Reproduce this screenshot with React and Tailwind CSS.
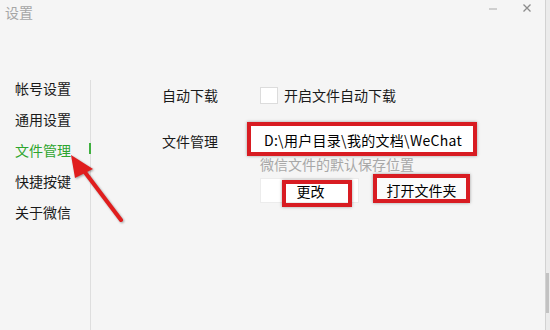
import React from 'react';

const menu = ['帐号设置', '通用设置', '文件管理', '快捷按键', '关于微信'];

function App() {
  const active = '文件管理';

  return (
    <div className="w-[550px] h-[330px] bg-[#f5f5f5] relative overflow-hidden flex font-['Noto_Sans_CJK_SC',sans-serif] text-[14px] text-[#1a1a1a]">
      <div className="flex-1 flex flex-col">
        {/* title bar */}
        <div className="h-[72px] flex items-start justify-between">
          <span className="ml-[5px] mt-[4px] leading-[17px] text-[#a6a6a6]">设置</span>
          <div className="flex items-start gap-[26px] mr-[14px] mt-[4px]">
            <div className="w-[8px] h-[2px] bg-[#cfcfcf] mt-[4px]" />
            <svg width="8" height="8" viewBox="0 0 8 8">
              <path d="M0.5 0.5 L7.5 7.5 M7.5 0.5 L0.5 7.5" stroke="#8c8c8c" strokeWidth="1.3" />
            </svg>
          </div>
        </div>

        <div className="flex flex-1">
          {/* sidebar */}
          <div className="w-[90px] flex flex-col">
            {menu.map(item => (
              <div
                key={item}
                className={`relative h-[31px] flex items-center pl-[15px] leading-none ${item === active ? 'text-[#2ea52e]' : ''}`}
              >
                {item}
                {item === active && (
                  <div className="absolute right-[-1px] top-[9px] w-[2px] h-[11px] bg-[#3fb03f] z-10" />
                )}
              </div>
            ))}
          </div>
          <div className="w-px bg-[#dedede] mt-[8px]" />

          {/* content */}
          <div className="flex-1 flex flex-col pl-[71px]">
            <div className="flex items-center h-[18px] mt-[14px]">
              <span className="w-[98px] leading-none">自动下载</span>
              <div className="w-[18px] h-[17px] bg-white border border-[#dcdcdc]" />
              <span className="ml-[6px] leading-none">开启文件自动下载</span>
            </div>

            <div className="flex items-center h-[34px] mt-[18px]">
              <span className="w-[98px] leading-none pt-[3px]">文件管理</span>
              <div className="ml-[-13px] w-[230px] h-[34px] bg-white border-4 border-[#d81c22] shadow-[0_0_3px_rgba(0,0,0,0.35)] flex items-center pl-[13px] pt-[2px] leading-none text-[14px] tracking-[0.3px] text-black">
                D:\用户目录\我的文档\WeChat
              </div>
            </div>

            <div className="ml-[98px] h-[16px] leading-[16px] text-[#a8a8a8]">微信文件的默认保存位置</div>

            <div className="ml-[98px] mt-[6px] flex items-start">
              <div className="relative w-[99px] h-[25px] bg-white border border-[#ececec] flex items-center justify-center leading-none text-black pl-[2px]">
                更改
                <div className="absolute left-[21px] top-[1px] w-[70px] h-[27px] border-4 border-[#d81c22] shadow-[0_0_3px_rgba(0,0,0,0.35)]" />
              </div>
              <div className="ml-[14px] mt-[-4px] w-[97px] h-[29px] bg-[#fbfbfb] border-4 border-[#d81c22] shadow-[0_0_3px_rgba(0,0,0,0.35)] flex items-center justify-center pt-[3px] leading-none text-black">
                打开文件夹
              </div>
            </div>
          </div>
        </div>
      </div>

      {/* right edge strip */}
      <div className="w-[5px] bg-[#ebebeb] border-l border-[#d2d2d2] flex flex-col">
        <div className="mt-[273px] h-[40px] w-[3px] bg-[#c2c2c2]" />
      </div>

      {/* annotation arrow */}
      <svg className="absolute inset-0 pointer-events-none drop-shadow-[1px_1px_1px_rgba(0,0,0,0.35)]" width="550" height="330" viewBox="0 0 550 330">
        <path d="M121 220 L84 171" stroke="#e01e1e" strokeWidth="4" strokeLinecap="round" />
        <path d="M71 155 L75 178 L93 169 Z" fill="#e01e1e" />
      </svg>
    </div>
  );
}

export default App;
